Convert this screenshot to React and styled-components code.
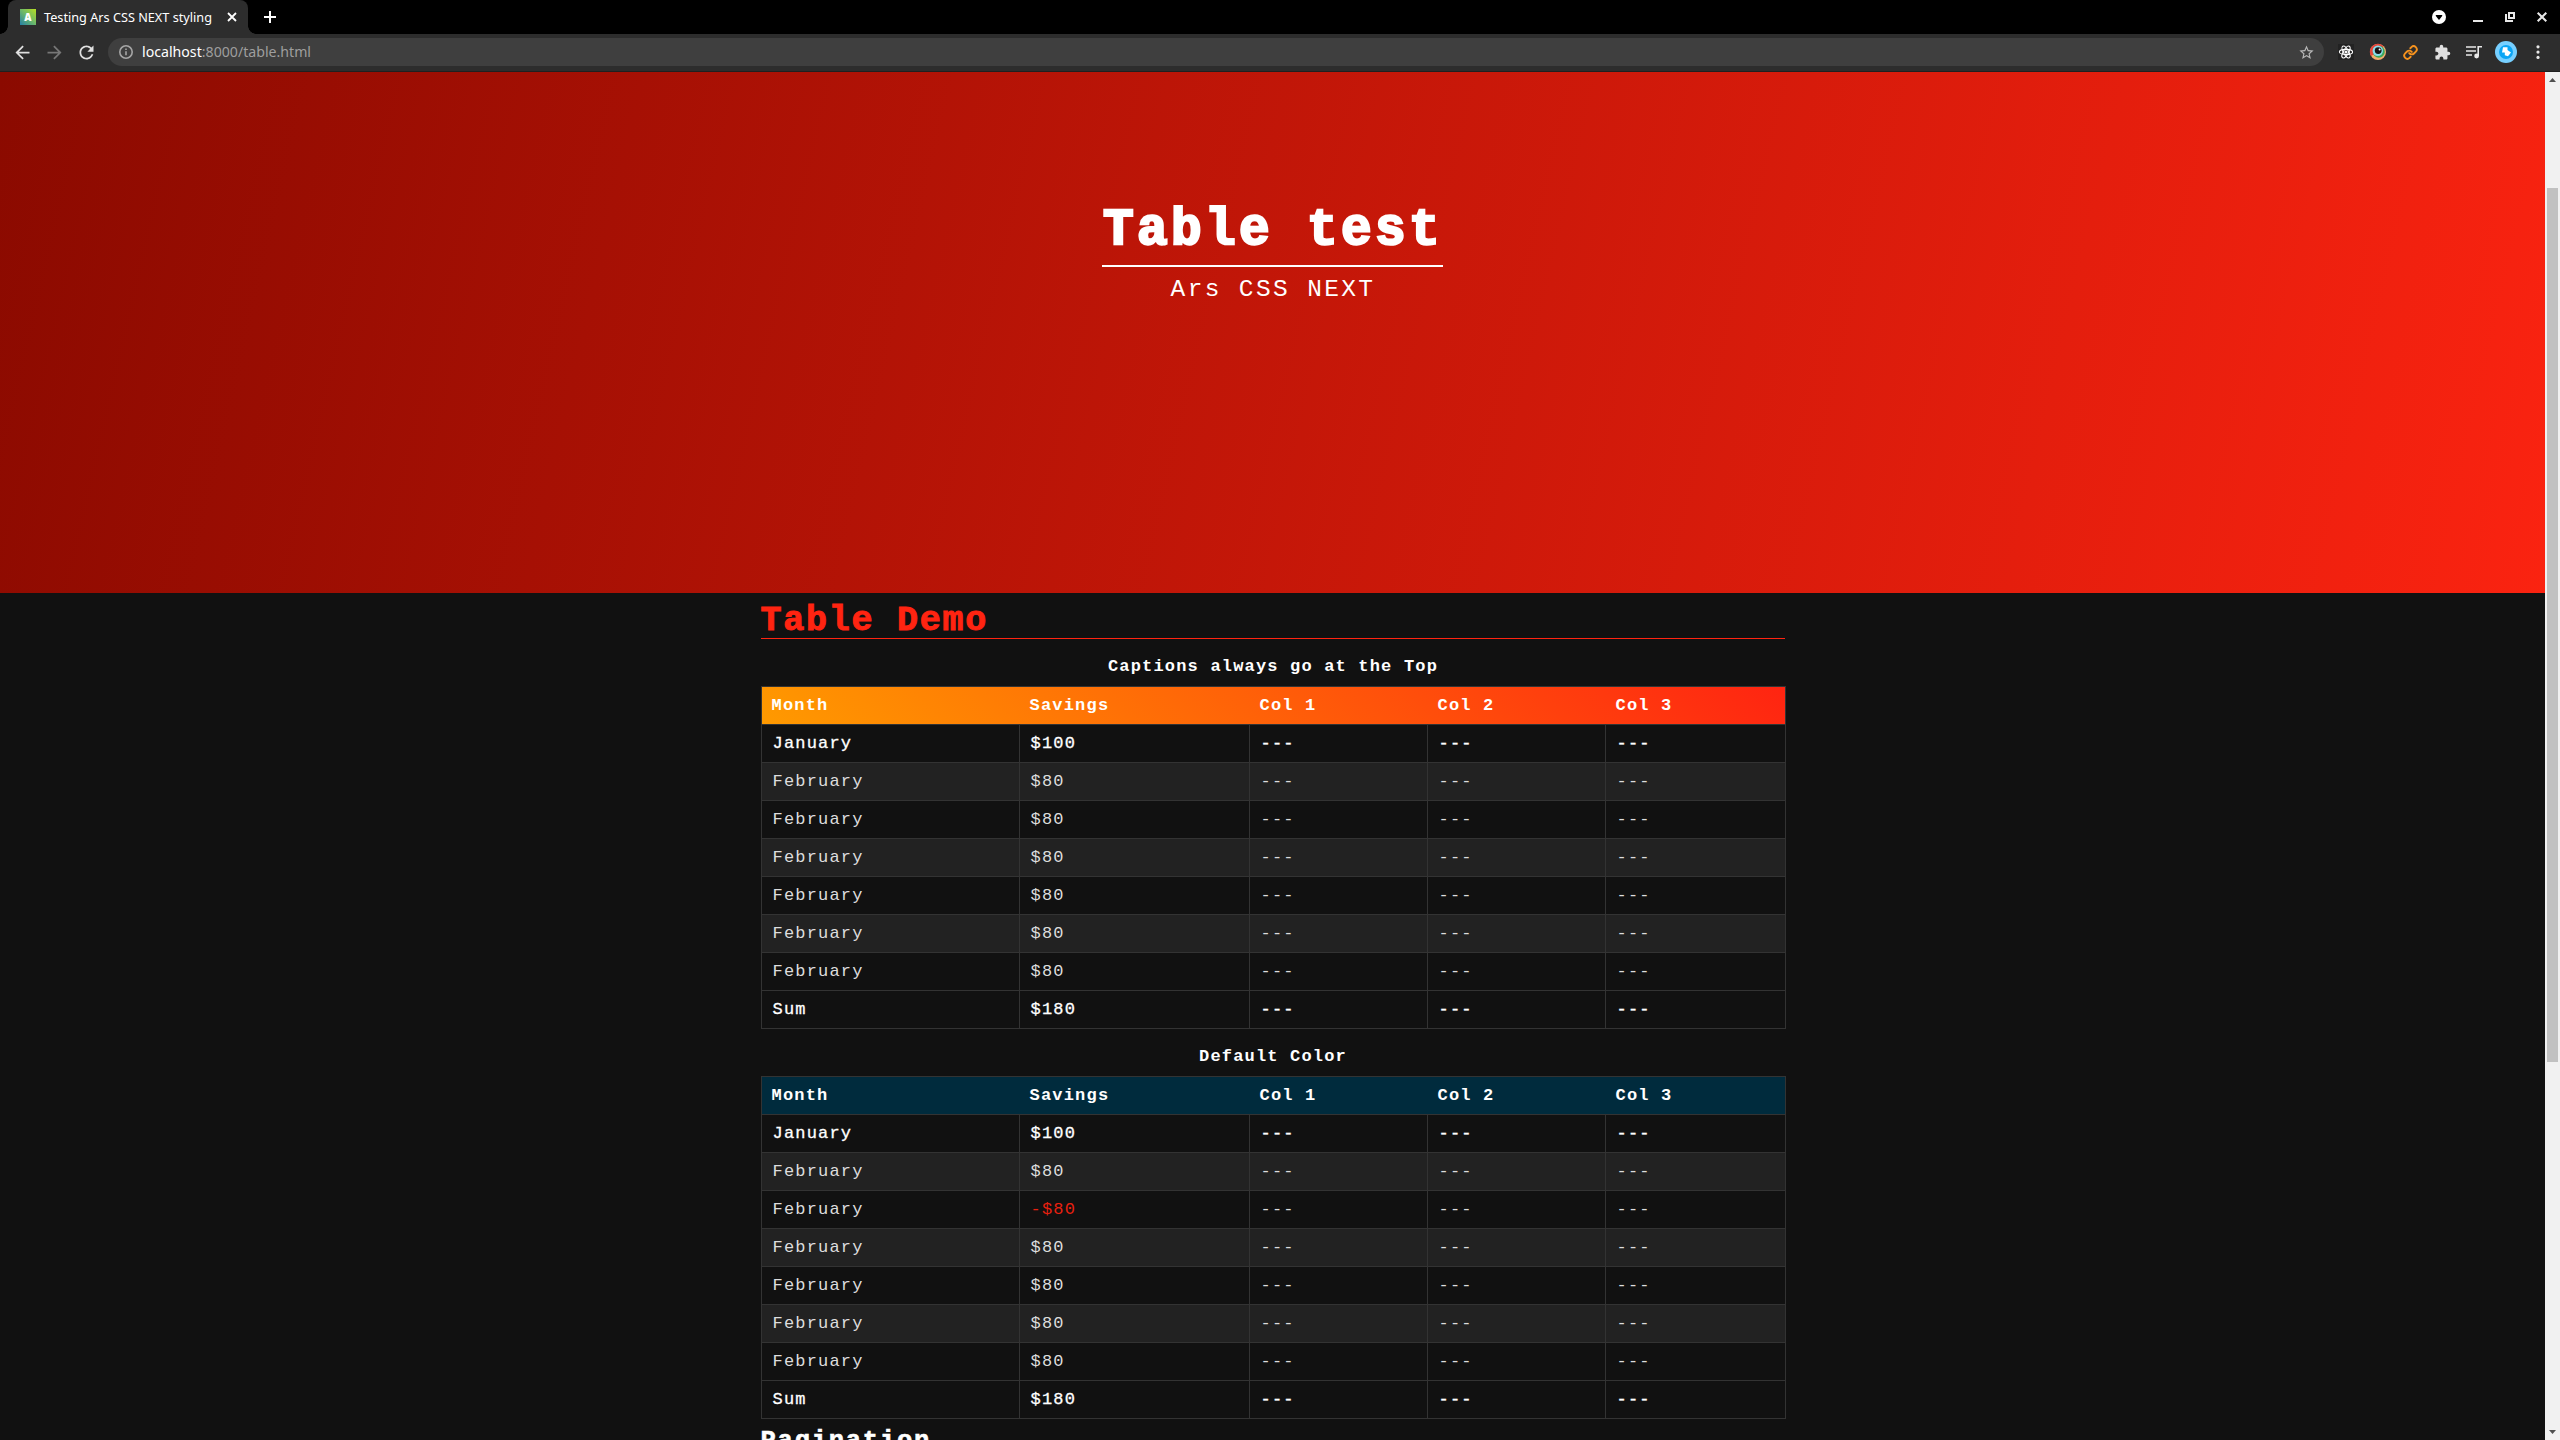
import React from "react";
import styled, { createGlobalStyle } from "styled-components";

const Global = createGlobalStyle`
  *{box-sizing:border-box}
  html,body{margin:0;background:#111;overflow:hidden}
`;
const Browser = styled.div`
  width:2560px;height:1440px;display:flex;flex-direction:column;overflow:hidden;
  background:#111;color:#fff;font-family:"Noto Sans",sans-serif;
`;
const TabStrip = styled.div`height:34px;background:#000;display:flex;align-items:center;flex:none;`;
const Tab = styled.div`
  margin-left:8px;width:240px;height:34px;background:#2d2d2d;border-radius:8px 8px 0 0;
  display:flex;align-items:center;padding:0 11px 0 12px;font-size:12.7px;color:#fff;position:relative;
  &::before,&::after{content:"";position:absolute;bottom:0;width:8px;height:8px;}
  &::before{left:-8px;background:radial-gradient(circle at 0 0,transparent 7.5px,#2d2d2d 8px);}
  &::after{right:-8px;background:radial-gradient(circle at 100% 0,transparent 7.5px,#2d2d2d 8px);}
`;
const Favicon = styled.span`
  width:16px;height:16px;background:linear-gradient(45deg,#2480a8,#6cb86a 50%,#b8de22);
  display:flex;align-items:center;justify-content:center;font:900 10px "Noto Sans",sans-serif;color:#fff;
`;
const TabTitle = styled.span`margin-left:8px;flex:1;white-space:nowrap;`;
const NewTab = styled.span`margin-left:16px;display:flex;`;
const WindowButtons = styled.div`margin-left:auto;display:flex;align-items:center;padding-right:2px;`;
const WindowSlot = styled.span`width:${(p) => p.$w}px;display:flex;justify-content:center;`;
const Toolbar = styled.div`
  height:38px;flex:none;background:#2d2d2d;border-bottom:1px solid #202020;display:flex;align-items:center;
  padding:0 6px 1px;
`;
const Nav = styled.div`display:flex;width:102px;`;
const NavSlot = styled.span`width:32px;display:flex;justify-content:center;`;
const Address = styled.div`
  flex:1;height:28px;border-radius:14px;background:#3f3f3f;display:flex;align-items:center;
  padding:0 9px 0 10px;font-size:14.15px;color:#9e9e9e;
  b{font-weight:400;color:#fff}
`;
const Url = styled.span`margin-left:8px;flex:1;padding-bottom:2px;`;
const Extensions = styled.div`
  display:grid;grid-template-columns:repeat(7,32px);justify-items:center;align-items:center;margin-left:6px;
`;

const Viewport = styled.div`flex:1;display:flex;min-height:0;`;
const Page = styled.main`
  flex:1;min-width:0;overflow:hidden;font-family:"Liberation Mono",monospace;
`;
const Hero = styled.header`
  height:521px;background:linear-gradient(103deg,#8b0a00,#ff2411 104%);
  display:flex;flex-direction:column;align-items:center;padding-top:120px;
`;
const HeroTitle = styled.h1`
  margin:0;height:75px;border-bottom:2px solid #fff;font-size:51px;line-height:77px;letter-spacing:3.4px;
  padding-left:1px;font-weight:700;-webkit-text-stroke:2.4px #fff;white-space:pre;
`;
const HeroSub = styled.p`
  margin:0;padding-left:1px;font-size:24.5px;line-height:46px;letter-spacing:2.37px;
`;
const Content = styled.section`width:1024px;margin:0 auto;`;
const Heading = styled.h2`
  margin:0;height:46px;font-size:35px;line-height:56px;letter-spacing:1.75px;font-weight:700;white-space:pre;
  color:#ff2411;-webkit-text-stroke:1px;border-bottom:1px solid #ff2411;
`;
const SubHeading = styled.h3`
  margin:0;font-size:25.6px;line-height:46px;letter-spacing:1.7px;font-weight:700;
  -webkit-text-stroke:.6px;
`;
const Table = styled.table`
  width:1024px;table-layout:fixed;border-collapse:collapse;font-size:17px;letter-spacing:1.18px;line-height:24px;
  margin-top:8px;
`;
const Caption = styled.caption`height:39px;padding-top:3px;font-weight:700;line-height:34px;`;
const Head = styled.thead`background:${(p) => p.$fill};`;
const HeadCell = styled.th`
  height:38px;padding:0 10px 0 10.6px;text-align:left;border-top:1px solid #333;border-bottom:1px solid #333;
  &:first-child{border-left:1px solid #333;padding-left:10px}
  &:last-child{border-right:1px solid #333}
`;
const Row = styled.tr`
  height:38px;background:${(p) => (p.$striped ? "#222" : "#111")};
  color:${(p) => (p.$strong ? "#fff" : "#ddd")};
  -webkit-text-stroke:${(p) => (p.$strong ? ".3px" : "0")};
`;
const Cell = styled.td`
  padding:0 11px;border:1px solid #333;
  color:${(p) => (p.$negative ? "#e8200f" : "inherit")};
`;
const Scrollbar = styled.div`
  width:15px;background:#f1f1f1;display:flex;flex-direction:column;align-items:center;
`;
const Thumb = styled.div`width:11px;height:874px;background:#c1c1c1;margin:100px 0 auto;`;
const Arrow = styled.svg`width:7px;height:4px;display:block;margin:6px 0;flex:none;`;

const WIDTHS = [258, 230, 178, 178, 180];

function Savings({ caption, fill, negativeRow }) {
  const rows = [["January", "$100"]];
  for (let i = 0; i < 6; i++) rows.push(["February", i === negativeRow ? "-$80" : "$80"]);
  rows.push(["Sum", "$180"]);
  return (
    <Table>
      <Caption>{caption}</Caption>
      <colgroup>{WIDTHS.map((w, i) => <col key={i} width={w} />)}</colgroup>
      <Head $fill={fill}>
        <tr>{["Month", "Savings", "Col 1", "Col 2", "Col 3"].map((t) => <HeadCell key={t}>{t}</HeadCell>)}</tr>
      </Head>
      <tbody>
        {rows.map(([m, s], i) => (
          <Row key={i} $striped={i % 2 === 1 && i < 7} $strong={i === 0 || i === 7}>
            <Cell>{m}</Cell>
            <Cell $negative={s[0] === "-"}>{s}</Cell>
            <Cell>---</Cell><Cell>---</Cell><Cell>---</Cell>
          </Row>
        ))}
      </tbody>
    </Table>
  );
}

const Stroke = ({ d, size = 20, box = 20, color = "#e8e8e8", w = 2, children }) => (
  <svg width={size} height={size} viewBox={`0 0 ${box} ${box}`} fill="none" stroke={color} strokeWidth={w}>
    {d && <path d={d} />}{children}
  </svg>
);
const Solid = ({ d, size = 20, color = "#e0e0e0" }) => (
  <svg width={size} height={size} viewBox="0 0 24 24" fill={color}><path d={d} /></svg>
);

const BACK = "M20 11H7.83l5.59-5.59L12 4l-8 8 8 8 1.41-1.41L7.83 13H20v-2z";
const FORWARD = "M12 4l-1.41 1.41L16.17 11H4v2h12.17l-5.58 5.59L12 20l8-8z";
const RELOAD = "M17.65 6.35C16.2 4.9 14.21 4 12 4c-4.42 0-7.99 3.58-7.99 8s3.57 8 7.99 8c3.73 0 6.84-2.55 7.73-6h-2.08c-.82 2.33-3.04 4-5.65 4-3.31 0-6-2.69-6-6s2.69-6 6-6c1.66 0 3.14.69 4.22 1.78L13 11h7V4l-2.35 2.35z";
const STAR = "M22 9.24l-7.19-.62L12 2 9.19 8.63 2 9.24l5.46 4.73L5.82 21 12 17.27 18.18 21l-1.63-7.03L22 9.24zM12 15.4l-3.76 2.27 1-4.28-3.32-2.88 4.38-.38L12 6.1l1.71 4.04 4.38.38-3.32 2.88 1 4.28L12 15.4z";
const PUZZLE = "M20.5 11H19V7c0-1.1-.9-2-2-2h-4V3.5a2.5 2.5 0 0 0-5 0V5H4c-1.1 0-1.99.9-1.99 2v3.8H3.5c1.49 0 2.7 1.21 2.7 2.7s-1.21 2.7-2.7 2.7H2V20c0 1.1.9 2 2 2h3.8v-1.5c0-1.49 1.21-2.7 2.7-2.7 1.49 0 2.7 1.21 2.7 2.7V22H17c1.1 0 2-.9 2-2v-4h1.5a2.5 2.5 0 0 0 0-5z";

export default function App() {
  return (
    <Browser>
      <Global />
      <TabStrip>
        <Tab>
          <Favicon>A</Favicon>
          <TabTitle>Testing Ars CSS NEXT styling</TabTitle>
          <Stroke size={10} box={10} color="#fff" w={1.8} d="M1 1l8 8M9 1l-8 8" />
        </Tab>
        <NewTab><Stroke size={12} box={12} color="#fff" d="M6 0v12M0 6h12" /></NewTab>
        <WindowButtons>
          <WindowSlot $w={46}>
            <svg width="16" height="16" viewBox="0 0 16 16"><circle cx="8" cy="8" r="7" fill="#fff" /><path d="M4.8 6h6.4v1L8 11 4.8 7z" fill="#000" /></svg>
          </WindowSlot>
          <WindowSlot $w={32}><Stroke size={16} box={16} d="M3 12h10" /></WindowSlot>
          <WindowSlot $w={32}><Stroke size={16} box={16}><path d="M7 4h5v5H7zM4 5v7M3 12h8" /></Stroke></WindowSlot>
          <WindowSlot $w={32}><Stroke size={16} box={16} d="M3.7 3.7l8.6 8.6M12.3 3.7l-8.6 8.6" /></WindowSlot>
        </WindowButtons>
      </TabStrip>
      <Toolbar>
        <Nav>
          <NavSlot><Solid size={21} d={BACK} /></NavSlot>
          <NavSlot><Solid size={21} color="#777" d={FORWARD} /></NavSlot>
          <NavSlot><Solid size={21} d={RELOAD} /></NavSlot>
        </Nav>
        <Address>
          <Stroke size={16} box={16} color="#a6a6a6" w={1.6}><circle cx="8" cy="8" r="6.2" /><path d="M8 7.2v4M8 4.4v1.6" /></Stroke>
          <Url><b>localhost</b>:8000/table.html</Url>
          <Solid size={17} color="#b8b8b8" d={STAR} />
        </Address>
        <Extensions>
          <Stroke size={20} box={20} w={1.1} color="#fff">
            <rect x="2" y="2" width="16" height="16" fill="#222" stroke="none" />
            <ellipse cx="10" cy="10" rx="6.6" ry="2.6" />
            <ellipse cx="10" cy="10" rx="6.6" ry="2.6" transform="rotate(60 10 10)" />
            <ellipse cx="10" cy="10" rx="6.6" ry="2.6" transform="rotate(120 10 10)" />
            <circle cx="10" cy="10" r="1" fill="#fff" />
          </Stroke>
          <svg width="20" height="20" viewBox="0 0 20 20">
            <circle cx="10" cy="10" r="8" fill="#f3ae6e" /><path d="M3 14A8 8 0 0 1 15.5 4.2L10 10z" fill="#e4483c" />
            <circle cx="10.8" cy="9.8" r="6" fill="#3da85c" /><circle cx="9.8" cy="8.8" r="5.2" fill="#8adcea" />
            <circle cx="10.2" cy="8.6" r="3.4" fill="#151515" /><circle cx="11.6" cy="7.4" r="1" fill="#fff" />
          </svg>
          <svg width="15" height="15" viewBox="0 0 24 24" fill="none" stroke="#f7931e" strokeWidth="3" strokeLinecap="round">
            <path d="M10 13a5 5 0 0 0 7.54.54l3-3a5 5 0 0 0-7.07-7.07l-1.72 1.71M14 11a5 5 0 0 0-7.54-.54l-3 3a5 5 0 0 0 7.07 7.07l1.71-1.71" />
          </svg>
          <Solid size={17} d={PUZZLE} />
          <Stroke size={20} box={20} w={1.6}>
            <path d="M2 5h10M2 9h10M2 13h6M14.2 14V4.8H18" /><circle cx="12.6" cy="14" r="1.6" fill="#e8e8e8" />
          </Stroke>
          <svg width="22" height="22" viewBox="0 0 22 22">
            <circle cx="11" cy="11" r="11" fill="#76cfff" /><circle cx="11" cy="11" r="7" fill="#0aa5f5" />
            <path d="M8 6.2h4.5V9l3.5 2.5-3 3.8-3.2-1V11.500H7z" fill="#fff" />
          </svg>
          <svg width="20" height="20" viewBox="0 0 20 20" fill="#e8e8e8">
            <circle cx="10" cy="4.8" r="1.6" /><circle cx="10" cy="10.100" r="1.6" /><circle cx="10" cy="15.400" r="1.6" />
          </svg>
        </Extensions>
      </Toolbar>
      <Viewport>
        <Page>
          <Hero>
            <HeroTitle>Table test</HeroTitle>
            <HeroSub>Ars CSS NEXT</HeroSub>
          </Hero>
          <Content>
            <Heading>Table Demo</Heading>
            <Savings caption="Captions always go at the Top" fill="linear-gradient(45deg,#ff9a00,#ff2411)" negativeRow={-1} />
            <Savings caption="Default Color" fill="#002b3d" negativeRow={1} />
            <SubHeading>Pagination</SubHeading>
          </Content>
        </Page>
        <Scrollbar>
          <Arrow viewBox="0 0 7 4"><path d="M0 4L3.5 0 7 4z" fill="#505050" /></Arrow>
          <Thumb />
          <Arrow viewBox="0 0 7 4"><path d="M0 0h7L3.5 4z" fill="#505050" /></Arrow>
        </Scrollbar>
      </Viewport>
    </Browser>
  );
}
